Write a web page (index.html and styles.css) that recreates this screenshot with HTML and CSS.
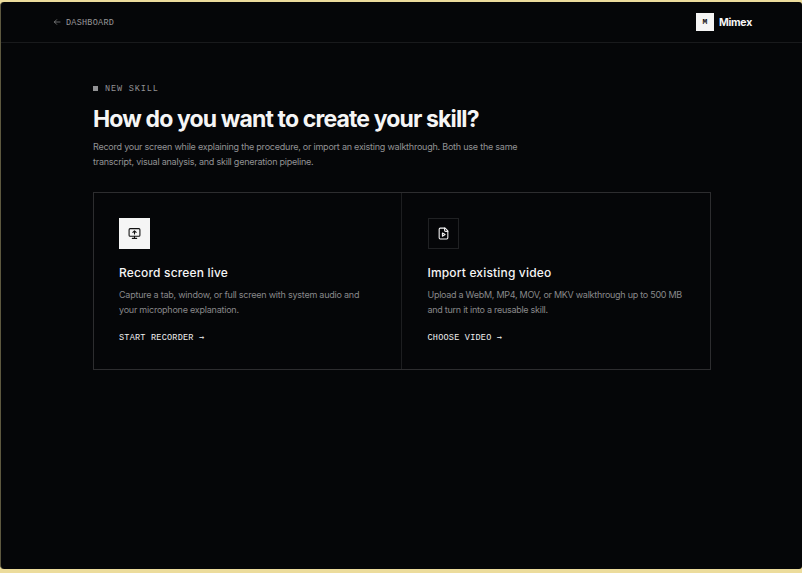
FILE: index.html
```html
<!DOCTYPE html>
<html lang="en">
<head>
<meta charset="utf-8">
<title>Mimex</title>
<link rel="stylesheet" href="styles.css">
</head>
<body>
<div class="window">
  <header class="topbar">
    <a class="back">
      <svg class="back-icon" viewBox="0 0 24 24"><path d="M21 12H4M11 5l-7 7 7 7"/></svg>
      <span>DASHBOARD</span>
    </a>
    <div class="brand"><span class="logo">M</span><span class="brand-name">Mimex</span></div>
  </header>
  <main class="content">
    <div class="eyebrow"><i class="square"></i><span>NEW SKILL</span></div>
    <h1>How do you want to create your skill?</h1>
    <p class="lead">Record your screen while explaining the procedure, or import an existing walkthrough. Both use the same<br>transcript, visual analysis, and skill generation pipeline.</p>
    <section class="options">
      <article class="card">
        <div class="tile tile-light">
          <svg viewBox="0 0 24 24"><rect x="2" y="3" width="20" height="14" rx="2"/><path d="M9 10l3-3 3 3M12 13V7M12 17v4M8 21h8"/></svg>
        </div>
        <h2>Record screen live</h2>
        <p class="desc">Capture a tab, window, or full screen with system audio and<br>your microphone explanation.</p>
        <a class="action">START RECORDER <span class="arrow">→</span></a>
      </article>
      <article class="card card-import">
        <div class="tile">
          <svg viewBox="0 0 24 24"><path d="M15 2H6a2 2 0 0 0-2 2v16a2 2 0 0 0 2 2h12a2 2 0 0 0 2-2V7z"/><path d="M14 2v4a2 2 0 0 0 2 2h4M10 11l5 3-5 3z"/></svg>
        </div>
        <h2>Import existing video</h2>
        <p class="desc">Upload a WebM, MP4, MOV, or MKV walkthrough up to 500 MB<br>and turn it into a reusable skill.</p>
        <a class="action">CHOOSE VIDEO <span class="arrow">→</span></a>
      </article>
    </section>
  </main>
</div>
</body>
</html>
```
FILE: styles.css
```css
* { box-sizing: border-box; margin: 0; padding: 0; }
html, body { height: 100%; }
body {
  background: #ecdc9c;
  font-family: Inter, "Liberation Sans", sans-serif;
  color: #f5f5f5;
  padding: 2px 0 4px;
  overflow: hidden;
}
svg { fill: none; stroke: currentColor; stroke-width: 2; stroke-linecap: round; stroke-linejoin: round; display: block; }
.window {
  height: 567px;
  background: #050608;
  border-left: 1px solid #5d583f;
  border-radius: 4px 3px 3px 4px;
  overflow: hidden;
}
.topbar {
  height: 41px;
  padding: 0 50px 0 52px;
  border-bottom: 1px solid #191a1c;
  display: flex;
  align-items: center;
  justify-content: space-between;
}
.back, .eyebrow, .action, .logo { font-family: "Liberation Mono", "DejaVu Sans Mono", monospace; }
.back { display: flex; align-items: center; gap: 5px; color: #98989a; font-size: 8.5px; line-height: 10px; letter-spacing: 0.24px; }
.back span, .eyebrow span { padding-top: 2px; }
.back-icon { width: 8px; height: 8px; }
.brand { display: flex; align-items: center; gap: 5px; }
.logo {
  width: 18px; height: 18px;
  background: #f5f5f5; color: #111;
  font-size: 8px; font-weight: 700; line-height: 18px; text-align: center;
}
.brand-name { font-size: 10.5px; font-weight: 650; line-height: 18px; letter-spacing: -0.25px; padding-top: 1px; margin-bottom: -1px; }
.content { padding: 40px 90px 0 92px; }
.eyebrow { display: flex; align-items: center; gap: 7px; height: 11px; line-height: 11px; color: #929294; font-size: 8.5px; letter-spacing: 0.86px; }
.square { width: 5px; height: 5px; background: #929294; }
h1 { margin-top: 10px; font-size: 23px; font-weight: 650; line-height: 30px; letter-spacing: -0.86px; white-space: nowrap; }
.lead { margin-top: 5px; font-size: 9px; line-height: 15px; letter-spacing: -0.225px; color: #929294; white-space: nowrap; }
.options { margin-top: 23px; height: 178px; display: grid; grid-template-columns: 308px 308px; border: 1px solid #2d2d2f; width: 618px; }
.card { padding: 25px; }
.card-import { border-left: 1px solid #1d1e20; margin-left: -1px; padding-left: 25.5px; }
.tile { width: 31px; height: 31px; border: 1px solid #202123; display: flex; align-items: center; justify-content: center; }
.tile-light { background: #f5f5f5; border-color: #f5f5f5; color: #111; }
.tile svg { width: 13px; height: 13px; }
h2 { margin-top: 15px; font-size: 12px; font-weight: 550; line-height: 18px; letter-spacing: 0.17px; white-space: nowrap; }
.desc { margin-top: 5px; font-size: 9px; line-height: 15px; letter-spacing: -0.23px; color: #88888a; white-space: nowrap; }
.card-import .desc { letter-spacing: -0.27px; }
.action { display: block; margin-top: 14px; font-size: 8.5px; line-height: 12px; letter-spacing: 0.23px; color: #f0f0f0; }
.arrow { font-family: "DejaVu Sans Mono", monospace; }
```
